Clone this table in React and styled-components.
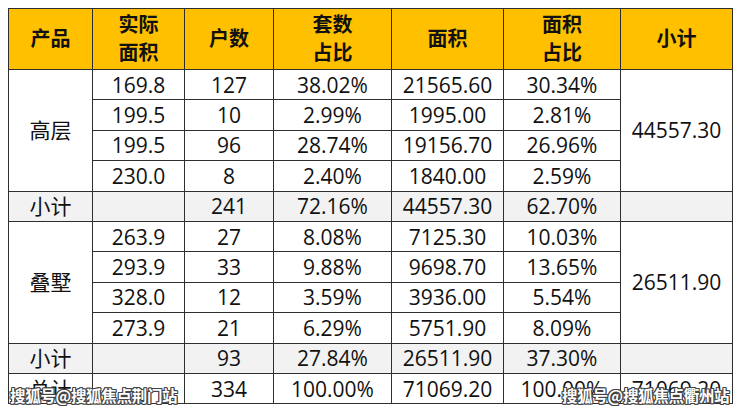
import { Fragment } from "react";
import styled, { createGlobalStyle } from "styled-components";

const GlobalStyle = createGlobalStyle`
  html, body {
    margin: 0;
    padding: 0;
    background: #ffffff;
  }
  body {
    padding: 8px;
    font-family: "Open Sans", "Noto Sans CJK SC", sans-serif;
  }
`;

const Wrapper = styled.div`
  position: relative;
  width: 724px;
`;

const Table = styled.table`
  width: 724px;
  border-collapse: collapse;
  table-layout: fixed;
  font-family: "Open Sans", "Noto Sans CJK SC", sans-serif;
  font-size: 21px;
  color: #111;
`;

const HeadRow = styled.tr`
  height: 61px;
  background: #ffc000;
`;

const Row = styled.tr`
  height: 30.4px;
  background: ${(p) => (p.$sub ? "#f2f2f2" : "#ffffff")};
`;

const Th = styled.th`
  border: 1px solid #2e2e2e;
  font-weight: 700;
  font-size: 20px;
  line-height: 28px;
  text-align: center;
  vertical-align: middle;
  padding: 0;
  color: #111;
`;

const Td = styled.td`
  border: 1px solid #2e2e2e;
  text-align: center;
  vertical-align: middle;
  padding: 0;
  line-height: 28px;
  white-space: nowrap;
`;

// site watermark stamped over the bottom corners
const Watermark = styled.div`
  position: absolute;
  top: 378px;
  left: ${(p) => p.$left}px;
  font-family: "Noto Sans CJK SC", sans-serif;
  font-size: 15.5px;
  font-weight: 700;
  line-height: 18px;
  color: #ffffff;
  letter-spacing: -0.3px;
  text-shadow:
    1px 0 0 #444, -1px 0 0 #444, 0 1px 0 #444, 0 -1px 0 #444,
    1px 1px 0 #444, -1px -1px 0 #444, 1px -1px 0 #444, -1px 1px 0 #444;
  white-space: nowrap;
`;

const widths = [84, 92, 89, 118, 112, 117, 112];

const groups = [
  {
    name: "高层",
    total: "44557.30",
    rows: [
      ["169.8", "127", "38.02%", "21565.60", "30.34%"],
      ["199.5", "10", "2.99%", "1995.00", "2.81%"],
      ["199.5", "96", "28.74%", "19156.70", "26.96%"],
      ["230.0", "8", "2.40%", "1840.00", "2.59%"],
    ],
    sub: ["241", "72.16%", "44557.30", "62.70%"],
  },
  {
    name: "叠墅",
    total: "26511.90",
    rows: [
      ["263.9", "27", "8.08%", "7125.30", "10.03%"],
      ["293.9", "33", "9.88%", "9698.70", "13.65%"],
      ["328.0", "12", "3.59%", "3936.00", "5.54%"],
      ["273.9", "21", "6.29%", "5751.90", "8.09%"],
    ],
    sub: ["93", "27.84%", "26511.90", "37.30%"],
  },
];

export default function App() {
  return (
    <>
      <GlobalStyle />
      <Wrapper>
        <Table>
          <colgroup>
            {widths.map((w, i) => (
              <col key={i} style={{ width: w }} />
            ))}
          </colgroup>
          <thead>
            <HeadRow>
              <Th>产品</Th>
              <Th>实际<br />面积</Th>
              <Th>户数</Th>
              <Th>套数<br />占比</Th>
              <Th>面积</Th>
              <Th>面积<br />占比</Th>
              <Th>小计</Th>
            </HeadRow>
          </thead>
          <tbody>
            {groups.map((g) => (
              <Fragment key={g.name}>
                {g.rows.map((r, i) => (
                  <Row key={i}>
                    {i === 0 && <Td rowSpan={4}>{g.name}</Td>}
                    {r.map((c, j) => (
                      <Td key={j}>{c}</Td>
                    ))}
                    {i === 0 && <Td rowSpan={4}>{g.total}</Td>}
                  </Row>
                ))}
                <Row $sub>
                  <Td>小计</Td>
                  <Td />
                  {g.sub.map((c, j) => (
                    <Td key={j}>{c}</Td>
                  ))}
                  <Td />
                </Row>
              </Fragment>
            ))}
            <Row>
              <Td>总计</Td>
              <Td />
              <Td>334</Td>
              <Td>100.00%</Td>
              <Td>71069.20</Td>
              <Td>100.00%</Td>
              <Td>71069.20</Td>
            </Row>
          </tbody>
        </Table>
        <Watermark $left={2}>搜狐号@搜狐焦点荆门站</Watermark>
        <Watermark $left={554}>搜狐号@搜狐焦点衢州站</Watermark>
      </Wrapper>
    </>
  );
}
